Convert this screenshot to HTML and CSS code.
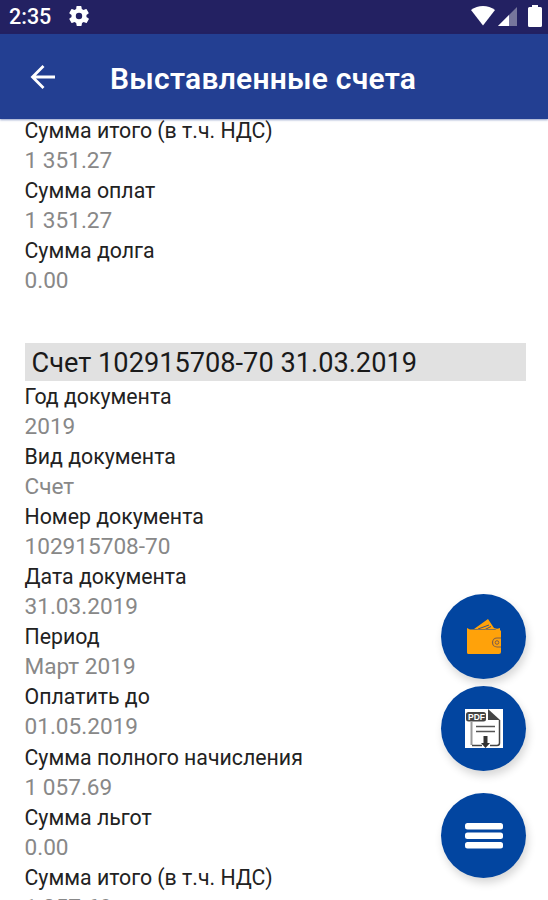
FILE: index.html
```
<!DOCTYPE html>
<html lang="ru">
<head>
    <meta charset="UTF-8">
    <meta name="viewport" content="width=device-width, initial-scale=1.0">
    <title>Выставленные счета</title>
    <link rel="stylesheet" href="styles.css">
</head>
<body>
    <div class="screen">
        <div class="status-bar">
            <span class="clock">2:35</span>
            <svg class="gear" viewBox="2 2 20 20" width="20" height="20">
                <path fill="#fff" fill-rule="evenodd" d="M19.4 13c0-.3.1-.6.1-1s0-.7-.1-1l2.1-1.6c.2-.2.3-.4.1-.7l-2-3.4c-.1-.2-.4-.3-.6-.2l-2.5 1c-.5-.4-1.1-.7-1.7-1l-.4-2.6c0-.3-.2-.5-.5-.5h-4c-.2 0-.4.2-.5.5L9.2 5.1c-.6.3-1.2.6-1.7 1L5 5.1c-.2-.1-.5 0-.6.2l-2 3.4c-.1.3-.1.5.1.7L4.6 11c0 .3-.1.7-.1 1s0 .7.1 1l-2.1 1.6c-.2.2-.2.4-.1.7l2 3.4c.1.2.4.3.6.2l2.5-1c.5.4 1.1.7 1.7 1l.4 2.6c.1.3.3.5.5.5h4c.3 0 .5-.2.5-.5l.4-2.6c.6-.3 1.2-.6 1.7-1l2.5 1c.2.1.5 0 .6-.2l2-3.4c.2-.3.1-.5-.1-.7zM12 15.2a3.2 3.2 0 1 1 0-6.4 3.2 3.2 0 0 1 0 6.4z"/>
            </svg>
            <div class="indicators">
                <svg width="24" height="20" viewBox="0 0 24 20">
                    <path fill="#fff" d="M0 4C7-1.3 17-1.3 24 4L12 19.5z"/>
                </svg>
                <svg class="signal" width="19" height="19" viewBox="0 0 19 19">
                    <path fill="#77769c" d="M19 0v19H0z"/>
                    <path fill="#fff" d="M11 8v11H0z"/>
                </svg>
                <svg class="battery" width="14" height="22" viewBox="0 0 14 22">
                    <path fill="#fff" d="M4 0h6v2h2.5q1.5 0 1.5 1.5v17q0 1.5-1.5 1.5h-11Q0 22 0 20.5v-17Q0 2 1.5 2H4z"/>
                </svg>
            </div>
        </div>

        <header class="app-bar">
            <svg class="back" width="26" height="24" viewBox="0 0 26 24" fill="none" stroke="#fff" stroke-width="2.8">
                <path d="M25 12H3M13.5 1L2.5 12l11 11"/>
            </svg>
            <h1>Выставленные счета</h1>
        </header>

        <main class="content">
            <dl class="fields">
                <dt>Сумма итого (в т.ч. НДС)</dt>
                <dd>1 351.27</dd>
                <dt>Сумма оплат</dt>
                <dd>1 351.27</dd>
                <dt>Сумма долга</dt>
                <dd>0.00</dd>
            </dl>

            <h2>Счет 102915708-70 31.03.2019</h2>
            <dl class="fields">
                <dt>Год документа</dt>
                <dd>2019</dd>
                <dt>Вид документа</dt>
                <dd>Счет</dd>
                <dt>Номер документа</dt>
                <dd>102915708-70</dd>
                <dt>Дата документа</dt>
                <dd>31.03.2019</dd>
                <dt>Период</dt>
                <dd>Март 2019</dd>
                <dt>Оплатить до</dt>
                <dd>01.05.2019</dd>
                <dt>Сумма полного начисления</dt>
                <dd>1 057.69</dd>
                <dt>Сумма льгот</dt>
                <dd>0.00</dd>
                <dt>Сумма итого (в т.ч. НДС)</dt>
                <dd>1 057.69</dd>
            </dl>
        </main>

        <div class="actions">
            <button class="fab">
                <svg width="36" height="36" viewBox="0 0 36 36">
                    <path fill="#ffa20a" d="M8 10L22 0l6 9 4 1z"/>
                    <path fill="none" stroke="#3c5283" stroke-width="1" d="M12 10l11-4M19 10.500l6-3"/>
                    <path fill="#ffa20a" d="M1 9l3 1.500h25l5-1.500v2l1 1v21q0 2-2 2H2.500Q1 35 1 33.500z"/>
                    <path fill="none" stroke="#805f4a" stroke-width="1.200" d="M35 19h-4a4.500 4.500 0 0 0 0 9h4"/>
                    <circle cx="31" cy="23.500" r="1.800" fill="none" stroke="#805f4a"/>
                </svg>
            </button>
            <button class="fab">
                <svg width="38" height="39" viewBox="0 0 38 39">
                    <path fill="#fff" d="M0 0h38v39H0z"/>
                    <path fill="none" stroke="#999" stroke-width="2" d="M6.500 13v23"/>
                    <path fill="none" stroke="#444" stroke-width="1.500" d="M7 36.500h10M25 36.500h7q2.500 0 2.500-2.500V11"/>
                    <path fill="#444" d="M23 0l12 11H23z"/>
                    <rect x="1" y="3" width="20" height="9.500" rx="2.500" fill="#444"/>
                    <text class="pdf" x="3" y="11">PDF</text>
                    <path stroke="#555" stroke-width="1.600" d="M11 17.500h19M11 22.500h19"/>
                    <path fill="#333" d="M18.500 27h4v7h2.500l-4.500 5-4.500-5h2.500z"/>
                </svg>
            </button>
            <button class="fab menu">
                <svg width="38" height="26" viewBox="0 0 38 26" fill="#fff">
                    <rect width="38" height="6.5" rx="2.5"/>
                    <rect y="9.5" width="38" height="6.5" rx="2.5"/>
                    <rect y="19" width="38" height="6.5" rx="2.5"/>
                </svg>
            </button>
        </div>
    </div>
</body>
</html>
```
FILE: styles.css
```
* {
    margin: 0;
    padding: 0;
    box-sizing: border-box;
}

body {
    background-color: #fff;
    font-family: Roboto, 'Liberation Sans', sans-serif;
}

.screen {
    position: relative;
    display: flex;
    flex-direction: column;
    width: 548px;
    height: 900px;
    overflow: hidden;
}

.status-bar {
    flex: none;
    display: flex;
    align-items: center;
    height: 34px;
    padding: 0 6px 2px 9px;
    background-color: #232162;
    color: #fff;
}

.clock {
    width: 60px;
    padding-top: 1px;
    font-size: 21.5px;
    font-weight: 500;
    line-height: 32px;
}

.indicators {
    display: flex;
    align-items: center;
    margin-left: auto;
}

.signal {
    margin: 1px 11px 0 3px;
}

.app-bar {
    flex: none;
    display: flex;
    align-items: center;
    height: 85px;
    padding-left: 30px;
    background-color: #233f92;
    box-shadow: 0 1px 2px rgba(35, 63, 146, 0.5);
    color: #fff;
}

.app-bar h1 {
    margin: 3px 0 0 54px;
    font-size: 30px;
    font-weight: 600;
    letter-spacing: 0.25px;
}

.content {
    flex: 1;
    min-height: 0;
    padding: 0 22px 0 24.5px;
}

.content .fields:first-child {
    margin-top: -3px;
    margin-bottom: 47px;
}

.fields {
    font-size: 21.3px;
    line-height: 30.06px;
    white-space: nowrap;
}

.fields dt {
    height: 30.06px;
    color: #222;
}

.fields dd {
    height: 30.06px;
    color: #888;
    font-size: 22.6px;
}

.content h2 {
    height: 38px;
    padding-left: 7px;
    background-color: #e1e1e1;
    color: #1a1a1a;
    font-size: 27.2px;
    font-weight: 400;
    line-height: 40px;
    white-space: nowrap;
}

.content h2 + .fields {
    padding-top: 0.7px;
}

.actions {
    position: absolute;
    right: 22px;
    bottom: 22px;
    display: flex;
    flex-direction: column;
    gap: 7px;
}

.fab {
    display: flex;
    align-items: center;
    justify-content: center;
    width: 85px;
    height: 85px;
    border: none;
    border-radius: 50%;
    background-color: #0245a0;
    box-shadow: 2px 5px 9px rgba(0, 0, 0, 0.16);
}

.fab.menu {
    margin-top: 15px;
}

.pdf {
    fill: #fff;
    font-size: 8.5px;
    font-weight: 700;
}
```
